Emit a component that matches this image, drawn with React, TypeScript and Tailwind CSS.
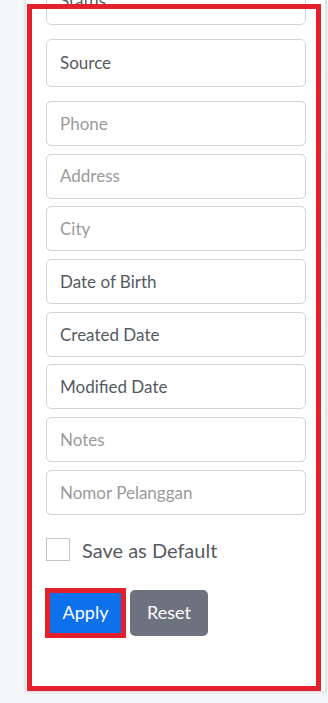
import React from "react";

const fields: { label: string; filled: boolean }[] = [
  { label: "Phone", filled: false },
  { label: "Address", filled: false },
  { label: "City", filled: false },
  { label: "Date of Birth", filled: true },
  { label: "Created Date", filled: true },
  { label: "Modified Date", filled: true },
  { label: "Notes", filled: false },
  { label: "Nomor Pelanggan", filled: false },
];

const Field = ({ label, filled, tall }: { label: string; filled: boolean; tall?: boolean }) => (
  <div
    className={`${tall ? "h-[48px]" : "h-[45px]"} w-full flex items-center px-[13px] border border-[#ced4da] rounded-[5px] bg-white text-[17px] ${
      filled ? "text-[#555a5f]" : "text-[#9a9a9a]"
    }`}
  >
    {label}
  </div>
);

export default function App() {
  return (
    <div
      className="w-[328px] h-[703px] bg-[#f3f6f9] overflow-hidden relative flex"
      style={{ fontFamily: "Lato, 'Open Sans', sans-serif" }}
    >
      {/* filter panel */}
      <div className="ml-[25px] w-[301px] h-[691px] bg-white border-l border-r border-[#dee2e6] shadow-[0_1px_3px_rgba(0,0,0,0.12)] shrink-0 overflow-hidden">
        <div className="pl-[20px] pr-[19px] mt-[-23px] flex flex-col">
          {/* status (scrolled out of view) */}
          <Field label="Status" filled tall />
          <div className="mt-[14px]">
            <Field label="Source" filled tall />
          </div>
          <div className="mt-[14px] flex flex-col gap-[7.7px]">
            {fields.map((f) => (
              <Field key={f.label} label={f.label} filled={f.filled} />
            ))}
          </div>

          <label className="mt-[20px] flex items-center gap-[12px]">
            <span className="w-[24px] h-[23px] border border-[#c4c4c4] bg-white" />
            <span className="text-[20px] text-[#555a5f]">Save as Default</span>
          </label>

          <div className="mt-[23px] flex items-center gap-[4px] ml-[-1px]">
            <button className="w-[81px] h-[50px] border-[5px] border-[#e3202b] bg-[#0c71ea] text-white text-[18px]">
              Apply
            </button>
            <button className="w-[78px] h-[46px] rounded-[5px] bg-[#6c737e] text-white text-[18px]">
              Reset
            </button>
          </div>
        </div>
      </div>

      {/* table edge behind */}
      <div className="flex-1 flex flex-col border-l border-[#e2e5e8] h-[691px]">
        <div className="h-[76px] border-b border-[#e2e5e8]" />
        <div className="h-[84px] border-b border-[#e2e5e8]" />
        <div className="h-[83px] border-b border-[#e2e5e8]" />
        <div className="h-[84px] border-b border-[#e2e5e8]" />
        <div className="h-[84px] border-b border-[#e2e5e8]" />
      </div>

      {/* highlight outline */}
      <div className="absolute left-[27px] top-[4px] w-[294px] h-[687px] border-[5px] border-[#e3202b] pointer-events-none" />
    </div>
  );
}
